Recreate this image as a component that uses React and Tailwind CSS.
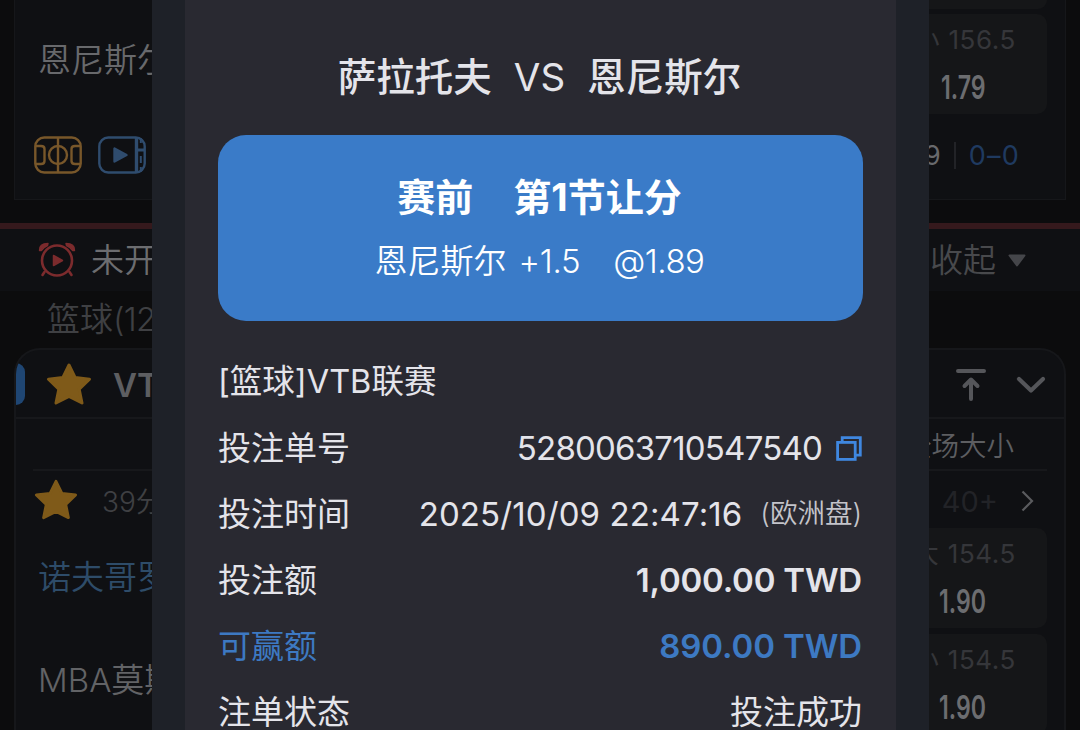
const StarIcon = ({ className }) => (
    <svg viewBox="0 0 46 42" className={className} fill="#7f5a19" stroke="#7f5a19" strokeWidth="3" strokeLinejoin="round">
        <path d="M23 2 L29.2 14.6 L43.5 16.2 L33.2 26.2 L36 40 L23 33.5 L10 40 L12.8 26.2 L2.5 16.2 L16.8 14.6 Z" />
    </svg>
);

const CourtIcon = () => (
    <svg width="48" height="38" viewBox="0 0 48 38" fill="none" stroke="#78572a" strokeWidth="2.4">
        <rect x="1.3" y="1.5" width="45.4" height="35" rx="9" />
        <path d="M24 1.5 V36.5" />
        <circle cx="24" cy="19" r="9" />
        <path d="M1.3 10 H7 Q10.5 10 10.5 13 V25 Q10.5 28 7 28 H1.3" />
        <path d="M46.7 10 H41 Q37.5 10 37.5 13 V25 Q37.5 28 41 28 H46.7" />
    </svg>
);

const VideoIcon = () => (
    <svg width="48" height="38" viewBox="0 0 48 38" fill="none" stroke="#2f4c6e" strokeWidth="2.4">
        <rect x="1.3" y="1.5" width="45.4" height="35" rx="9" />
        <path d="M38.5 1.5 V36.5" strokeWidth="3.4" />
        <path d="M38.5 14 H46.5" strokeWidth="3" />
        <path d="M42.8 2 V7 M42.8 20 V27 M42.8 31 V36" strokeWidth="2" />
        <path d="M16.5 12.5 V25.5 L28.5 19 Z" fill="#2f4c6e" strokeLinejoin="round" />
    </svg>
);

const AlarmIcon = () => (
    <svg width="38" height="36" viewBox="0 0 38 36" fill="none" stroke="#7c2b2d" strokeWidth="2.6" strokeLinecap="round">
        <circle cx="19" cy="18.5" r="15" />
        <path d="M6.5 30 L4.5 33 M31.5 30 L33.5 33" />
        <path d="M1.5 8.5 Q1 1.5 10 1.5 L9.5 3.5 Q5.5 5 3.5 8.5 Z M36.5 8.5 Q37 1.5 28 1.5 L28.5 3.5 Q32.5 5 34.5 8.5 Z" fill="#7c2b2d" strokeWidth="1.4" strokeLinejoin="round" />
        <path d="M15.5 13.5 V23.5 L24.5 18.5 Z" fill="#7c2b2d" strokeWidth="1.5" strokeLinejoin="round" />
    </svg>
);

const CopyIcon = () => (
    <svg width="26" height="25" viewBox="0 0 26 25" fill="none" stroke="#3f87e0" strokeWidth="2.8">
        <rect x="1.6" y="6.4" width="17.6" height="17" />
        <path d="M6.2 6.4 V1.6 H24.3 V19.2 H19.2" />
    </svg>
);

const OddsBox = ({ side, line, odds }) => (
    <div className="flex h-[100px] w-[200px] flex-col items-end rounded-[10px] bg-[#151618] pr-[31px]">
        <div className="mt-[8px] flex h-[36px] items-center gap-[7px] text-[26px] text-[#35363a]">
            <span className="mr-[2px]">{side}</span>
            <span className="tracking-[0.6px]">{line}</span>
        </div>
        <div className="mr-[30px] mt-[11px] flex h-[36px] origin-right scale-x-[0.7] items-center text-[33px] font-semibold text-[#6c6d70]">
            {odds}
        </div>
    </div>
);

const LiveMatch = () => (
    <div className="mx-[14px] flex h-[200px] shrink-0 justify-between border border-t-0 border-[#16171a] bg-[#0f1013]">
        <div className="flex flex-col pl-[19px]">
            <div className="mt-[38px] flex h-11 items-center pl-[4px] text-[33px] font-[350] text-[#68696c]">恩尼斯尔</div>
            <div className="mt-[54px] flex gap-4">
                <CourtIcon />
                <VideoIcon />
            </div>
        </div>
        <div className="flex flex-col items-end pr-[18px]">
            <div className="h-[9px] w-[200px] rounded-b-[10px] bg-[#151618]" />
            <div className="mt-[5px]">
                <OddsBox side="小" line="156.5" odds="1.79" />
            </div>
            <div className="mr-[27px] mt-[23px] flex h-9 items-center text-[27px] text-[#68696c]">
                <span>99</span>
                <span className="mx-[13px] h-[27px] w-[2px] bg-[#222327]" />
                <span className="tracking-[1.2px] text-[#1f3a60]">0–0</span>
            </div>
        </div>
    </div>
);

const LeagueCard = () => (
    <div className="mx-[14px] h-[420px] shrink-0 overflow-hidden rounded-t-[26px] border-2 border-b-0 border-[#16171a] bg-[#0f1013]">
        <div className="flex h-[69px] items-center justify-between border-b-2 border-[#17181b] pr-[18px]">
            <div className="flex items-center">
                <div className="h-[42px] w-[9px] rounded-r-[9px] bg-[#1f4673]" />
                <StarIcon className="ml-[21px] h-[42px] w-[46px]" />
                <span className="ml-[21px] pt-[3px] text-[33px] font-semibold text-[#5d5e61]">VTB联赛</span>
            </div>
            <div className="flex items-center gap-[29px] pt-[3px]">
                <svg width="32" height="34" viewBox="0 0 32 34" fill="none" stroke="#55565a" strokeWidth="4" strokeLinecap="round" strokeLinejoin="round">
                    <path d="M3 3 H29 M16 12 V31 M9.5 18 L16 11.5 L22.5 18" />
                </svg>
                <svg width="30" height="18" viewBox="0 0 30 18" fill="none" stroke="#55565a" strokeWidth="4.2" strokeLinecap="round" strokeLinejoin="round">
                    <path d="M3 3 L15 14.5 L27 3" />
                </svg>
            </div>
        </div>
        <div className="mx-[17px] flex h-[52px] items-center justify-end border-b-2 border-[#17181b] pr-[33px] pt-[5px] text-[27.5px] font-[350] text-[#5d5e61]">
            全场大小
        </div>
        <div className="flex h-[57px] items-center justify-between pl-[18px] pr-[30px] pt-[3px]">
            <div className="flex items-center">
                <StarIcon className="mb-[3px] h-[41px] w-[44px]" />
                <span className="ml-[24px] pt-[2px] text-[28px] font-[350] text-[#3f4043]">39分钟</span>
            </div>
            <div className="flex items-center gap-[23px]">
                <span className="text-[29px] text-[#222327]">40+</span>
                <svg width="13" height="22" viewBox="0 0 13 22" fill="none" stroke="#5a5b5e" strokeWidth="2.2">
                    <path d="M1.5 1.5 L11 11 L1.5 20.5" />
                </svg>
            </div>
        </div>
        <div className="flex justify-between pl-[22px] pr-[17px]">
            <div className="flex flex-col text-[33px] font-[350]">
                <div className="mt-[27px] flex h-11 items-center text-[#2e4c69]">诺夫哥罗德</div>
                <div className="mt-[59px] flex h-11 items-center text-[#626366]">MBA莫斯科</div>
            </div>
            <div className="flex flex-col gap-[6px]">
                <OddsBox side="大" line="154.5" odds="1.90" />
                <OddsBox side="小" line="154.5" odds="1.90" />
            </div>
        </div>
    </div>
);

const MatchList = () => (
    <div className="flex h-full flex-col bg-[#0c0c0d]">
        <LiveMatch />
        <div className="mt-[23px] h-[6px] shrink-0 bg-[#35191c]" />
        <div className="flex h-[62px] shrink-0 items-center justify-between bg-[#0f1013] pl-[38px] pr-[54px] text-[33px] font-[350]">
            <div className="flex items-center gap-[15px]">
                <AlarmIcon />
                <span className="text-[#6c6d70]">未开赛</span>
            </div>
            <div className="flex items-center gap-[12px] text-[#48494c]">
                <span>收起</span>
                <svg width="18" height="13" viewBox="0 0 18 13" fill="#45464a" stroke="#45464a" strokeWidth="2" strokeLinejoin="round">
                    <path d="M1.5 1.5 H16.5 L9 11.5 Z" />
                </svg>
            </div>
        </div>
        <div className="flex h-[57px] shrink-0 items-center pl-[47px] text-[33px] font-[350] text-[#3f4043]">
            篮球<span className="tracking-[-0.8px]">(12)</span>
        </div>
        <LeagueCard />
    </div>
);

const DetailRow = ({ label, className = 'text-[#e4e4ea]', children }) => (
    <div className={`flex h-[66px] items-center justify-between ${className}`}>
        <span>{label}</span>
        {children}
    </div>
);

const BetDetail = () => (
    <div className="h-full bg-[#292931] px-[33px] text-[33px] whitespace-nowrap text-[#e4e4ea]">
        <div className="flex h-[135px] items-center justify-center gap-[22px] pr-[2px] pt-[20px] text-[38.5px]">
            <span className="font-medium">萨拉托夫</span>
            <span>VS</span>
            <span className="font-medium">恩尼斯尔</span>
        </div>
        <div className="flex h-[186px] flex-col items-center rounded-[28px] bg-[#3a7bc8] text-white">
            <div className="mt-[37px] flex h-[50px] items-center gap-[40px] pr-[2px] text-[38px] font-bold">
                <span>赛前</span>
                <span>第1节让分</span>
            </div>
            <div className="mt-[15px] flex h-[48px] items-center pr-[2px] font-[350]">
                <span>恩尼斯尔</span>
                <span className="ml-[12px] tracking-[-0.3px]">+1.5</span>
                <span className="ml-[33px] tracking-[-0.5px]">@1.89</span>
            </div>
        </div>
        <div className="mt-[28px]">
            <div className="flex h-[66px] items-center text-[32.5px]">[篮球]VTB联赛</div>
            <DetailRow label="投注单号">
                <span className="flex items-center gap-[14px] pr-px">
                    <span className="tracking-[-0.8px]">5280063710547540</span>
                    <CopyIcon />
                </span>
            </DetailRow>
            <DetailRow label="投注时间">
                <span className="flex items-center">
                    <span className="tracking-[0.1px]">2025/10/09 22:47:16</span>
                    <span className="ml-[18px] pr-px text-[27.5px] font-[350] text-[#c4c4ca]">(欧洲盘)</span>
                </span>
            </DetailRow>
            <DetailRow label="投注额">
                <span className="mr-px font-semibold tracking-[-0.2px]">1,000.00 TWD</span>
            </DetailRow>
            <DetailRow label="可赢额" className="text-[#3d79c2]">
                <span className="mr-px font-semibold tracking-[-0.1px]">890.00 TWD</span>
            </DetailRow>
            <DetailRow label="注单状态">
                <span className="mr-px">投注成功</span>
            </DetailRow>
        </div>
    </div>
);

const App = () => {
    return (
        <div className="relative h-[730px] w-[1080px] overflow-hidden font-['Inter','Noto_Sans_CJK_SC',sans-serif] leading-none whitespace-nowrap">
            <MatchList />
            <div className="absolute inset-y-0 left-[152px] w-[777px] bg-[#1e2128] px-[33px]">
                <BetDetail />
            </div>
        </div>
    );
};

export default App;
